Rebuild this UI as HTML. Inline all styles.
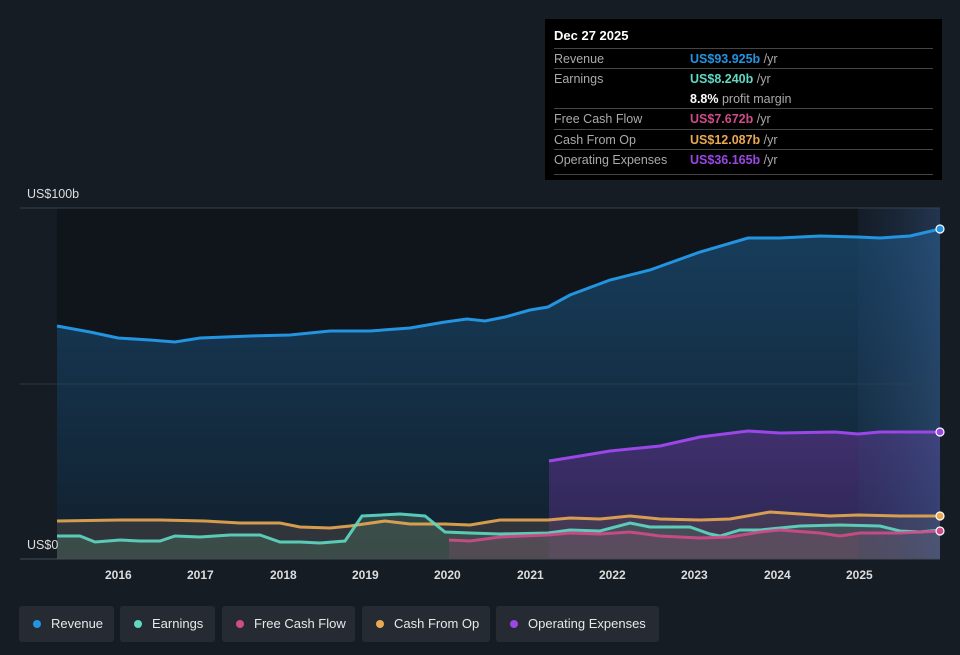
<!DOCTYPE html>
<html><head><style>
body{margin:0;background:#161c24;font-family:"Liberation Sans",sans-serif;}
#w{position:relative;width:960px;height:655px;overflow:hidden;background:#161c24}
.tt{position:absolute;left:545px;top:19px;width:397px;height:161px;background:#000;color:#aaa;font-size:12.5px}
.tt .r{position:absolute;left:9px;width:379px;border-top:1px solid #444;height:20px}
.tt span{position:absolute;top:3px}
.v{left:136px;font-weight:bold}
.lg{position:absolute;top:606px;height:36px;background:#262b33;border-radius:3px;color:#e8e8e8;font-size:13px;line-height:36px}
.lg i{display:inline-block;width:8px;height:8px;border-radius:50%;margin:0 10px 0 14px;vertical-align:0}
.yr{position:absolute;top:568px;color:#ddd;font-size:12px;font-weight:bold}
</style></head><body><div id="w">
<svg width="960" height="655" style="position:absolute;left:0;top:0">
<defs>
<linearGradient id="gr" x1="0" y1="0" x2="0" y2="1"><stop offset="0" stop-color="#173d5c"/><stop offset="1" stop-color="#11202d"/></linearGradient>
<linearGradient id="gp" x1="0" y1="0" x2="0" y2="1"><stop offset="0" stop-color="#40306e"/><stop offset="1" stop-color="#2a2550"/></linearGradient>
<linearGradient id="gf" x1="0" y1="0" x2="1" y2="0"><stop offset="0" stop-color="#2a4a70" stop-opacity="0.15"/><stop offset="1" stop-color="#3a5e90" stop-opacity="0.45"/></linearGradient>
</defs>
<rect x="57" y="208" width="883" height="351" fill="#10141b"/>
<path d="M57,326 L90,332 118,338 150,340 175,342 200,338 250,336 290,335 330,331 370,331 410,328 445,322 467,319 485,321 505,317 530,310 548,307 570,295 610,280 650,270 700,252 748,238 780,238 820,236 858,237 880,238 910,236 940,229 L940,559 L57,559Z" fill="url(#gr)"/>
<path d="M549,461 L580,456 610,451 660,446 700,437 748,431 780,433 835,432 858,434 880,432 940,432 L940,559 L549,559Z" fill="url(#gp)"/>
<path d="M57,521 L120,520 160,520 205,521 240,523 280,523 300,527 330,528 350,526 385,521 410,524 445,524 470,525 500,520 548,520 570,518 600,519 630,516 660,519 700,520 730,519 770,512 800,514 830,516 858,515 900,516 940,516 L940,559 L57,559Z" fill="#6a5a50" opacity="0.35"/>
<path d="M57,536 L80,536 95,542 120,540 140,541 160,541 175,536 200,537 230,535 260,535 280,542 300,542 320,543 345,541 362,516 400,514 425,516 445,532 470,533 500,534 548,533 570,530 600,531 630,523 650,527 690,527 710,534 720,536 740,530 760,530 800,526 840,525 880,526 900,531 920,532 940,530 L940,559 L57,559Z" fill="#4a6a5a" opacity="0.45"/>
<path d="M449,540 L470,541 500,537 548,535 570,533 600,534 630,532 660,536 700,538 730,537 760,532 780,530 820,533 840,536 860,533 900,533 940,531 L940,559 L449,559Z" fill="#8a4a70" opacity="0.3"/>
<rect x="858" y="208" width="82" height="351" fill="url(#gf)"/>
<line x1="20" y1="208" x2="940" y2="208" stroke="#3a4048"/>
<line x1="20" y1="384" x2="940" y2="384" stroke="#2e4050" opacity="0.8"/>
<path d="M57,326 L90,332 118,338 150,340 175,342 200,338 250,336 290,335 330,331 370,331 410,328 445,322 467,319 485,321 505,317 530,310 548,307 570,295 610,280 650,270 700,252 748,238 780,238 820,236 858,237 880,238 910,236 940,229" fill="none" stroke="#2394e0" stroke-width="3"/>
<path d="M549,461 L580,456 610,451 660,446 700,437 748,431 780,433 835,432 858,434 880,432 940,432" fill="none" stroke="#9b46e6" stroke-width="3"/>
<path d="M57,521 L120,520 160,520 205,521 240,523 280,523 300,527 330,528 350,526 385,521 410,524 445,524 470,525 500,520 548,520 570,518 600,519 630,516 660,519 700,520 730,519 770,512 800,514 830,516 858,515 900,516 940,516" fill="none" stroke="#e9a951" stroke-width="3" opacity="0.9"/>
<path d="M57,536 L80,536 95,542 120,540 140,541 160,541 175,536 200,537 230,535 260,535 280,542 300,542 320,543 345,541 362,516 400,514 425,516 445,532 470,533 500,534 548,533 570,530 600,531 630,523 650,527 690,527 710,534 720,536 740,530 760,530 800,526 840,525 880,526 900,531 920,532 940,530" fill="none" stroke="#5fd9c4" stroke-width="3" opacity="0.9"/>
<path d="M449,540 L470,541 500,537 548,535 570,533 600,534 630,532 660,536 700,538 730,537 760,532 780,530 820,533 840,536 860,533 900,533 940,531" fill="none" stroke="#d04b8a" stroke-width="3" opacity="0.9"/>
<line x1="20" y1="559" x2="940" y2="559" stroke="#444b55"/>
<circle cx="940" cy="229" r="4" fill="#2394e0" stroke="#fff" stroke-width="1.2"/>
<circle cx="940" cy="432" r="4" fill="#9b46e6" stroke="#fff" stroke-width="1.2"/>
<circle cx="940" cy="516" r="4" fill="#e9a951" stroke="#fff" stroke-width="1.2"/>
<circle cx="940" cy="531" r="4" fill="#d04b8a" stroke="#fff" stroke-width="1.2"/>
</svg>
<div style="position:absolute;left:27px;top:187px;color:#ddd;font-size:12.5px">US$100b</div>
<div style="position:absolute;left:27px;top:538px;color:#ddd;font-size:12.5px">US$0</div>
<div class="yr" style="left:105px">2016</div><div class="yr" style="left:187px">2017</div><div class="yr" style="left:270px">2018</div><div class="yr" style="left:352px">2019</div><div class="yr" style="left:434px">2020</div><div class="yr" style="left:517px">2021</div><div class="yr" style="left:599px">2022</div><div class="yr" style="left:681px">2023</div><div class="yr" style="left:764px">2024</div><div class="yr" style="left:846px">2025</div>
<div class="tt">
<div style="position:absolute;left:9px;top:9px;color:#fff;font-weight:bold;font-size:13px">Dec 27 2025</div>
<div class="r" style="top:29px"><span>Revenue</span><span class="v" style="color:#2394e0">US$93.925b <b style="color:#aaa;font-weight:normal">/yr</b></span></div>
<div class="r" style="top:49px;border-top:1px solid #444;height:40px"><span>Earnings</span><span class="v" style="color:#5fd9c4">US$8.240b <b style="color:#aaa;font-weight:normal">/yr</b></span><span class="v" style="top:23px;color:#fff">8.8% <b style="color:#aaa;font-weight:normal">profit margin</b></span></div>
<div class="r" style="top:89px"><span>Free Cash Flow</span><span class="v" style="color:#d04b8a">US$7.672b <b style="color:#aaa;font-weight:normal">/yr</b></span></div>
<div class="r" style="top:110px"><span>Cash From Op</span><span class="v" style="color:#e9a951">US$12.087b <b style="color:#aaa;font-weight:normal">/yr</b></span></div>
<div class="r" style="top:130px;height:24px;border-bottom:1px solid #444"><span>Operating Expenses</span><span class="v" style="color:#9b46e6">US$36.165b <b style="color:#aaa;font-weight:normal">/yr</b></span></div>
</div>
<div class="lg" style="left:19px;width:95px"><i style="background:#2394e0"></i>Revenue</div>
<div class="lg" style="left:120px;width:95px"><i style="background:#5fd9c4"></i>Earnings</div>
<div class="lg" style="left:222px;width:133px"><i style="background:#d04b8a"></i>Free Cash Flow</div>
<div class="lg" style="left:362px;width:128px"><i style="background:#e9a951"></i>Cash From Op</div>
<div class="lg" style="left:496px;width:163px"><i style="background:#9b46e6"></i>Operating Expenses</div>
</div></body></html>
